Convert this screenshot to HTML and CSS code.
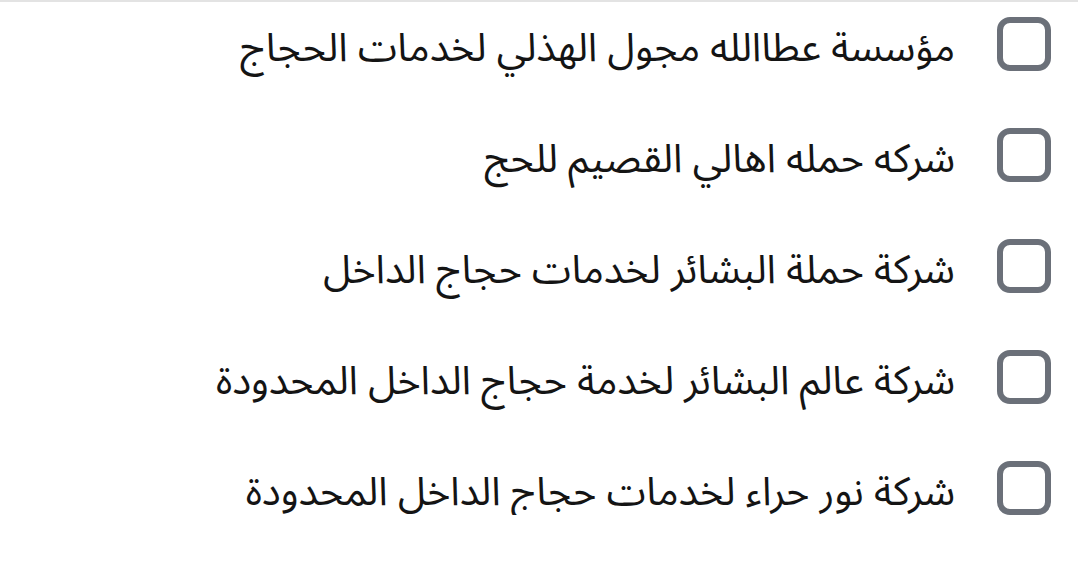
FILE: index.html
```html
<!DOCTYPE html>
<html lang="ar" dir="rtl">
<head>
<meta charset="utf-8">
<link rel="stylesheet" href="styles.css">
</head>
<body>
<div class="topline"></div>
<ul class="list">
  <li class="item"><span class="box"></span><span class="label">مؤسسة عطاالله مجول الهذلي لخدمات الحجاج</span></li>
  <li class="item"><span class="box"></span><span class="label">شركه حمله اهالي القصيم للحج</span></li>
  <li class="item"><span class="box"></span><span class="label">شركة حملة البشائر لخدمات حجاج الداخل</span></li>
  <li class="item"><span class="box"></span><span class="label">شركة عالم البشائر لخدمة حجاج الداخل المحدودة</span></li>
  <li class="item"><span class="box"></span><span class="label">شركة نور حراء لخدمات حجاج الداخل المحدودة</span></li>
</ul>
</body>
</html>
```
FILE: styles.css
```css
html, body {
  margin: 0;
  padding: 0;
  background: #ffffff;
}
body {
  font-family: "Noto Sans Arabic", "Noto Sans", "DejaVu Sans", sans-serif;
  color: #141414;
}
.topline {
  height: 2px;
  background: #e3e3e3;
}
.list {
  list-style: none;
  margin: 0;
  padding: 15px 27px 0 0;
  display: flex;
  flex-direction: column;
  gap: 57px;
}
.item {
  display: flex;
  align-items: center;
  gap: 42px;
  height: 54px;
}
.box {
  box-sizing: border-box;
  width: 54px;
  height: 54px;
  border: 6px solid #6b7079;
  border-radius: 13px;
  flex: none;
}
.label {
  font-size: 39.7px;
  line-height: 54px;
  padding-top: 8px;
  white-space: nowrap;
}
```
